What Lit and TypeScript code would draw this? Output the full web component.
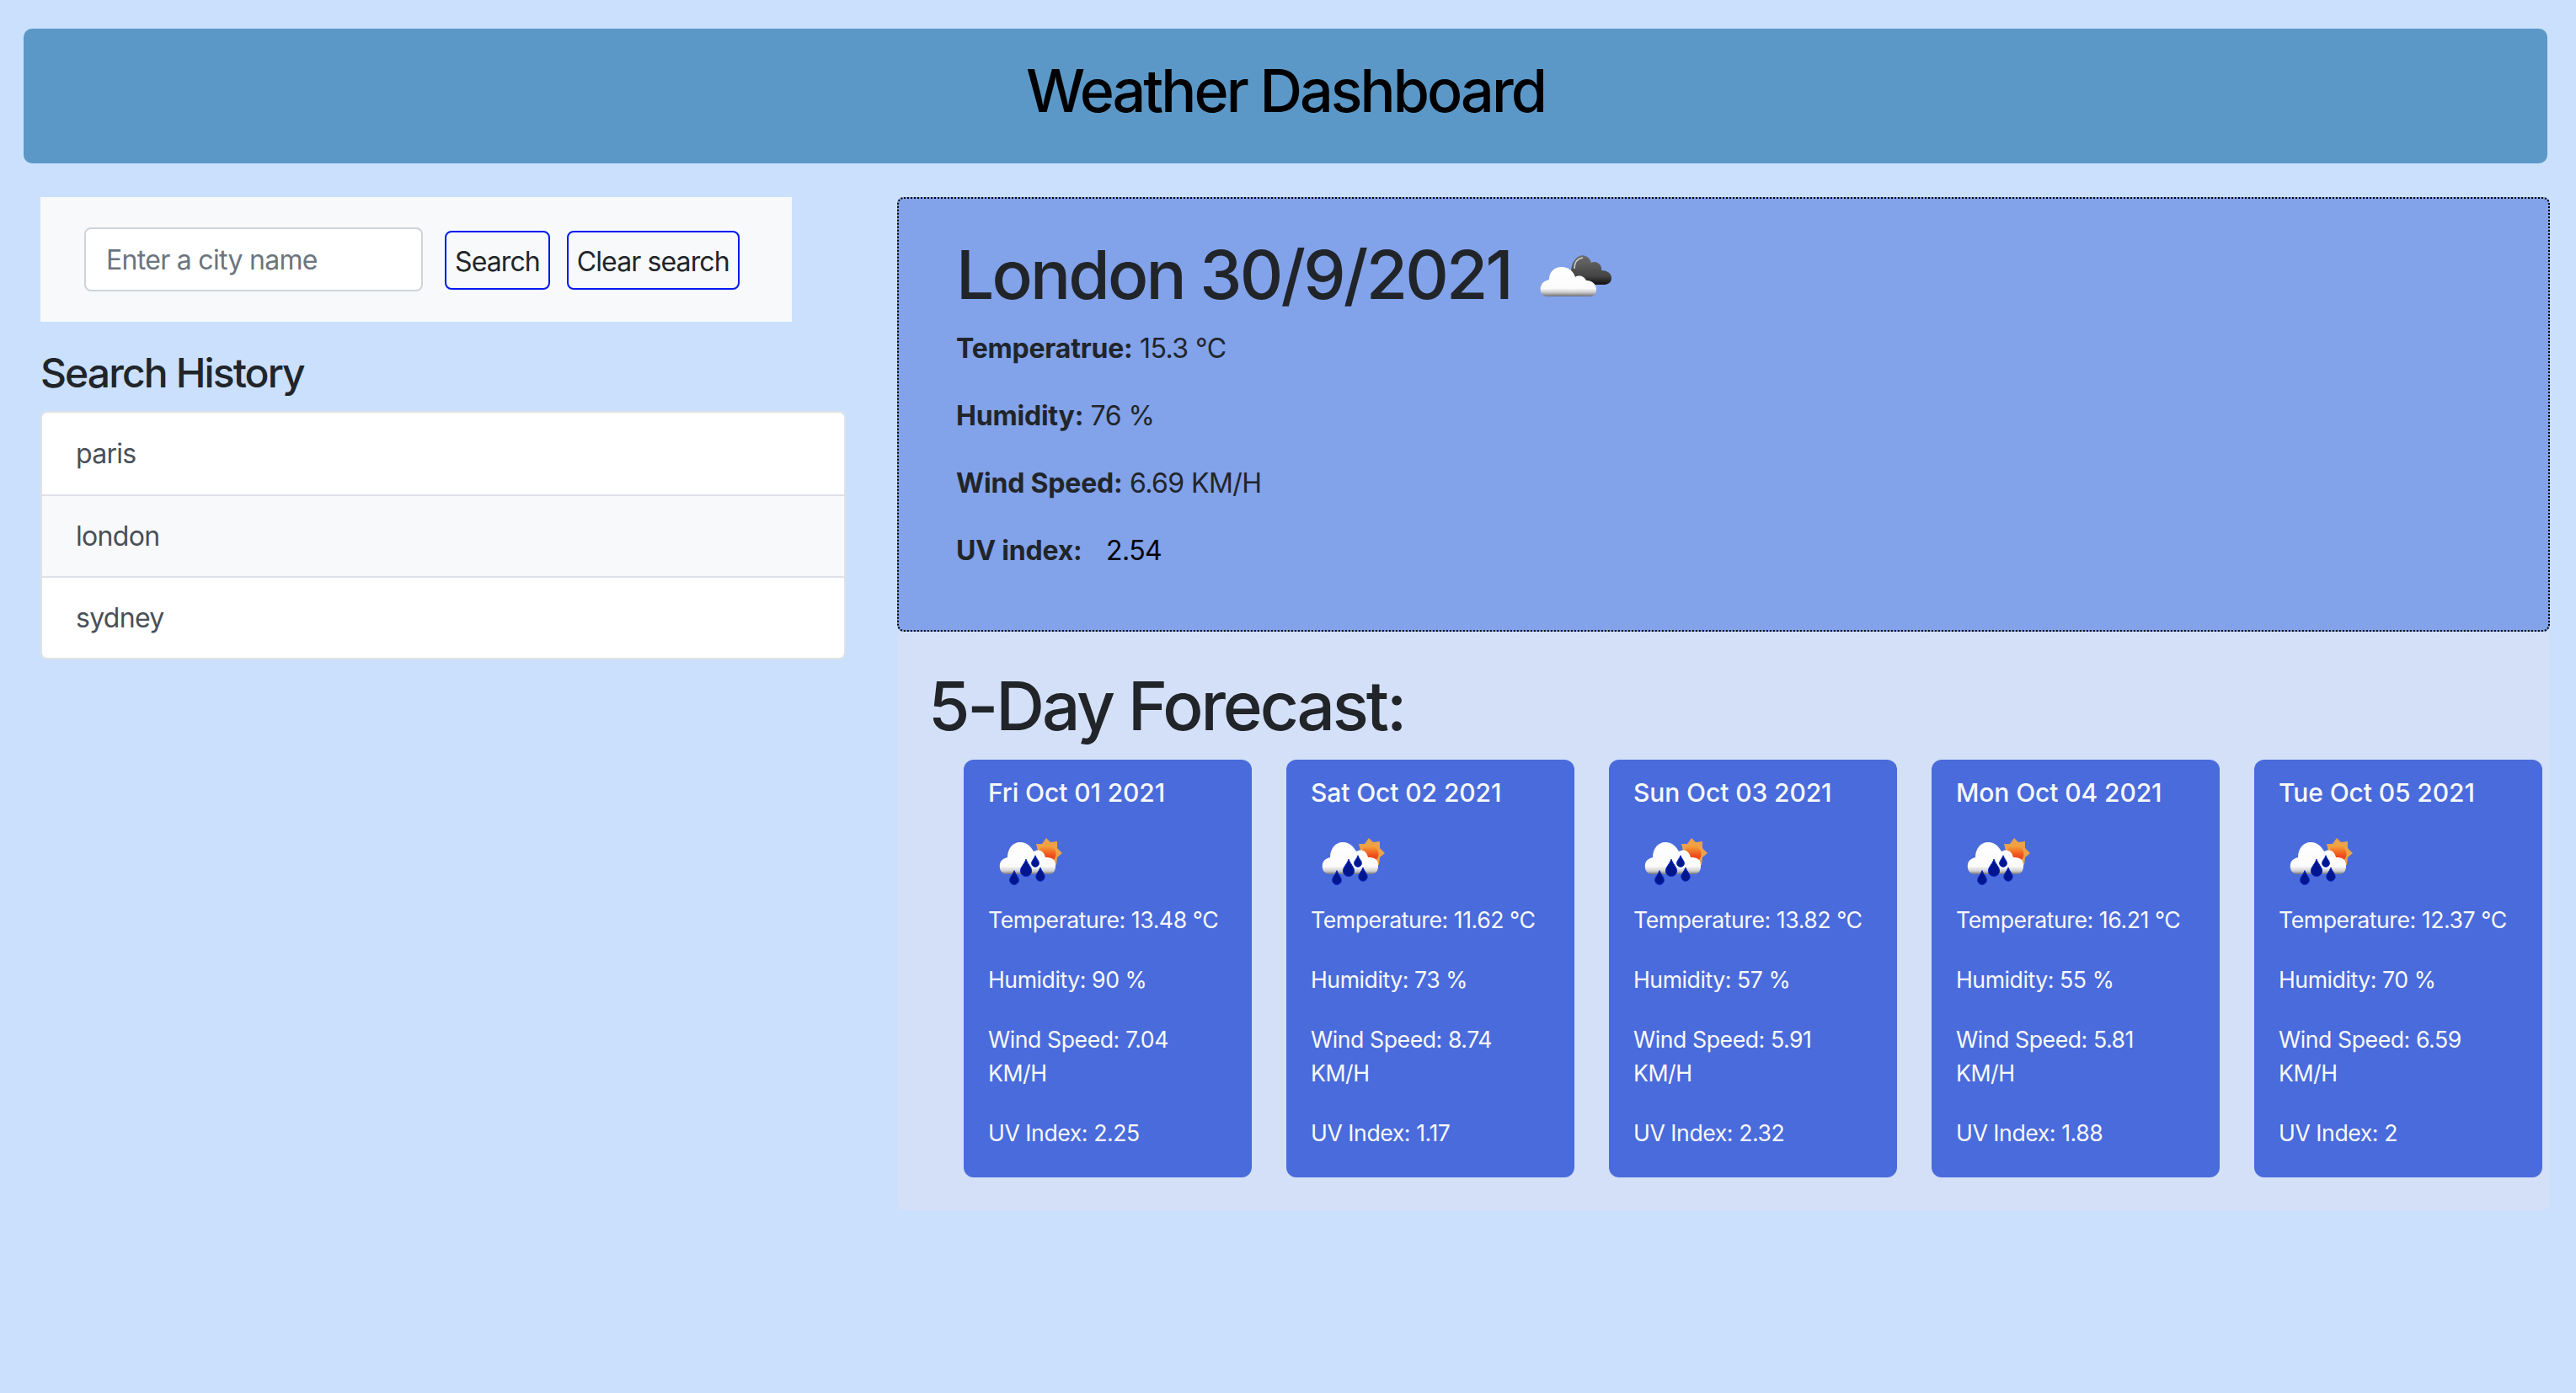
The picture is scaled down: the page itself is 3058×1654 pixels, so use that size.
import { LitElement, css, html, svg } from 'lit'
import { customElement } from 'lit/decorators.js'

const forecast = [
  { date: 'Fri Oct 01 2021', temp: '13.48', humidity: '90', wind: '7.04', uv: '2.25' },
  { date: 'Sat Oct 02 2021', temp: '11.62', humidity: '73', wind: '8.74', uv: '1.17' },
  { date: 'Sun Oct 03 2021', temp: '13.82', humidity: '57', wind: '5.91', uv: '2.32' },
  { date: 'Mon Oct 04 2021', temp: '16.21', humidity: '55', wind: '5.81', uv: '1.88' },
  { date: 'Tue Oct 05 2021', temp: '12.37', humidity: '70', wind: '6.59', uv: '2' },
]

const drop = (x: number, y: number, r: number) =>
  svg`<path d="M${x} ${y - r * 2.1} C${x + r * 0.3} ${y - r * 1.2} ${x + r} ${y - r * 0.7} ${x + r} ${y} A${r} ${r} 0 0 1 ${x - r} ${y} C${x - r} ${y - r * 0.7} ${x - r * 0.3} ${y - r * 1.2} ${x} ${y - r * 2.1}Z" fill="#00128f" stroke="#0a2bc4" stroke-width="1" />`

// cloudy icon from the current weather panel
@customElement('cloud-icon')
export class CloudIcon extends LitElement {
  static styles = css`
    :host {
      display: block;
      width: 100px;
      height: 100px;
    }
    svg {
      display: block;
    }
  `

  render() {
    return html`<svg width="100" height="100" viewBox="0 0 100 100">
      <defs>
        <linearGradient id="white" gradientUnits="userSpaceOnUse" x1="0" y1="40" x2="0" y2="74">
          <stop offset="0" stop-color="#fff" />
          <stop offset=".72" stop-color="#fbfbfb" />
          <stop offset=".86" stop-color="#c9c9c9" />
          <stop offset="1" stop-color="#6d6f74" />
        </linearGradient>
        <linearGradient id="dark" gradientUnits="userSpaceOnUse" x1="0" y1="26" x2="0" y2="60">
          <stop offset="0" stop-color="#6a6a6a" />
          <stop offset=".7" stop-color="#444" />
          <stop offset="1" stop-color="#111" />
        </linearGradient>
        <filter id="soft" x="-10%" y="-10%" width="120%" height="120%">
          <feGaussianBlur stdDeviation=".7" />
        </filter>
      </defs>
      <g filter="url(#soft)">
        <path
          d="M47 58 C42 50 43 34 51 28 C58 22 66 27 68 34 C74 31 81 36 80 43 C86 43 92 46 92 52 C92 58 87 60 83 60 L60 60Z"
          fill="url(#dark)"
        />
        <path d="M48 41 C48 33 52 29 58 28" fill="none" stroke="#c9c9c9" stroke-width="1.6" />
        <path
          d="M14 74 C8 72 6 65 9 60 C11 56 15 55 18 54 C18 45 24 39 33 39 C41 39 47 44 49 51 C53 48 60 50 62 55 C69 55 74 59 74 66 C74 71 71 74 66 74Z"
          fill="url(#white)"
        />
      </g>
    </svg>`
  }
}

// rain + sun icon used by the forecast cards
@customElement('rain-icon')
export class RainIcon extends LitElement {
  static styles = css`
    :host {
      display: block;
      width: 100px;
      height: 100px;
    }
    svg {
      display: block;
    }
  `

  render() {
    return html`<svg width="100" height="100" viewBox="0 0 100 100">
      <defs>
        <linearGradient id="white" gradientUnits="userSpaceOnUse" x1="0" y1="26" x2="0" y2="64">
          <stop offset="0" stop-color="#fff" />
          <stop offset=".75" stop-color="#fbfbfb" />
          <stop offset=".9" stop-color="#cfcfcf" />
          <stop offset="1" stop-color="#73767f" />
        </linearGradient>
        <linearGradient id="sun" gradientUnits="userSpaceOnUse" x1="0" y1="30" x2="0" y2="48">
          <stop offset="0" stop-color="#f5a63a" />
          <stop offset=".6" stop-color="#f0541f" />
          <stop offset="1" stop-color="#ee3b1e" />
        </linearGradient>
        <filter id="soft" x="-10%" y="-10%" width="120%" height="120%">
          <feGaussianBlur stdDeviation=".55" />
        </filter>
      </defs>
      <g filter="url(#soft)">
        <path
          d="M69 21 L74 26 L82 25 L82 33 L88 39 L82 44 L81 53 L70 52 L60 40 L57 28 L64 28Z"
          fill="#eba24a"
        />
        <circle cx="70" cy="40" r="10.5" fill="url(#sun)" />
        <path
          d="M21 64 C15 63 13 57 14 52 C15 47 19 45 23 44 C23 34 29 26 38 26 C47 26 51 32 54 37 C59 34 66 35 68 44 C71 44 75 44 78 47 C81 50 81 61 76 63 C74 64 72 64 70 64Z"
          fill="url(#white)"
        />
        <circle cx="56" cy="50" r="7.5" fill="#fff" />
        ${drop(31, 71, 5.4)} ${drop(45, 60, 6.6)} ${drop(62, 67, 5.2)} ${drop(56, 51, 4.4)}
      </g>
    </svg>`
  }
}

@customElement('app-root')
export class AppRoot extends LitElement {
  static styles = css`
    :host {
      display: block;
      min-height: 1654px;
      background: #cae0fd;
      font-family: Inter, 'Noto Sans', sans-serif;
      font-size: 32px;
      line-height: 48px;
      letter-spacing: -0.5px;
      color: #212529;
      padding: 34px 34px 0 28px;
      box-sizing: border-box;
    }
    * {
      box-sizing: border-box;
    }
    .top {
      height: 160px;
      background: #5b98c7;
      border-radius: 10px;
      display: flex;
      align-items: center;
      justify-content: center;
      padding-bottom: 12px;
    }
    .top h1 {
      margin: 0;
      font-size: 70px;
      line-height: 80px;
      font-weight: 500;
      letter-spacing: -2.95px;
      color: #000;
    }
    .layout {
      display: grid;
      grid-template-columns: 956px 1962px;
      column-gap: 61px;
      margin: 40px -3px 0 20px;
      align-items: start;
    }
    .search {
      width: 892px;
      height: 148px;
      background: #f8f9fa;
      display: flex;
      align-items: center;
      padding-left: 52px;
    }
    .search input {
      width: 402px;
      height: 76px;
      border: 2px solid #ced4da;
      border-radius: 8px;
      padding: 0 24px;
      font: inherit;
      letter-spacing: -0.7px;
      margin-right: 26px;
      background: #fff;
    }
    .search input::placeholder {
      color: #6c757d;
      opacity: 1;
    }
    .search button {
      height: 70px;
      margin-top: 2px;
      border: 2px solid #0019f0;
      border-radius: 8px;
      background: transparent;
      font: inherit;
      letter-spacing: -0.9px;
      color: #212529;
      padding: 4px 10px 0;
      margin-right: 20px;
    }
    .side h4 {
      margin: 32px 0 16px;
      font-size: 48px;
      line-height: 58px;
      font-weight: 500;
      letter-spacing: -1.9px;
    }
    .history {
      background: #fff;
      border: 2px solid #dfe2e6;
      border-radius: 8px;
      overflow: hidden;
      color: #495057;
      letter-spacing: -0.7px;
    }
    .history div {
      height: 97px;
      padding: 0 40px;
      display: flex;
      align-items: center;
      border-top: 2px solid #dfe2e6;
    }
    .history div:first-child {
      border-top: 0;
    }
    .history div:nth-child(even) {
      background: #f8f9fa;
    }
    .today {
      height: 516px;
      background: #82a2ea;
      border: 2px dotted #000;
      border-radius: 8px;
      padding: 46px 68px 0;
    }
    .today h2 {
      margin: 0;
      display: flex;
      align-items: center;
      font-size: 80px;
      line-height: 96px;
      font-weight: 500;
      letter-spacing: -2.8px;
      height: 88px;
    }
    .today cloud-icon {
      margin: 4px 0 0 27px;
    }
    .today p {
      margin: 0 0 32px;
      letter-spacing: -0.55px;
    }
    .today h2 + p {
      margin-top: 20px;
    }
    .today b {
      letter-spacing: -0.2px;
    }
    .uv {
      color: #000;
      margin-left: 20px;
    }
    .outlook {
      height: 687px;
      background: #d3e0f8;
      border-radius: 0 0 8px 8px;
      padding: 40px 9px 0 39px;
    }
    .outlook h2 {
      margin: 0 0 16px -2px;
      font-size: 80px;
      line-height: 96px;
      font-weight: 500;
      letter-spacing: -3.1px;
    }
    .cards {
      display: grid;
      grid-template-columns: repeat(5, 342px);
      column-gap: 41px;
      padding-left: 40px;
    }
    .card {
      height: 496px;
      background: #4a6bdb;
      border-radius: 12px;
      color: #f8f9fa;
      padding: 19px 29px 0;
      font-size: 26.67px;
      line-height: 40px;
      letter-spacing: -0.45px;
    }
    .card h5 {
      margin: 0;
      font-size: 30px;
      line-height: 40px;
      font-weight: 500;
      letter-spacing: -0.1px;
    }
    .card p {
      margin: 0 0 31px;
    }
    .card rain-icon {
      margin: 13px 0 -2px;
    }
    b {
      font-weight: 700;
    }
  `

  render() {
    return html`
      <header class="top"><h1>Weather Dashboard</h1></header>
      <div class="layout">
        <section class="side">
          <div class="search">
            <input type="text" placeholder="Enter a city name" />
            <button>Search</button>
            <button>Clear search</button>
          </div>
          <h4>Search History</h4>
          <div class="history">
            <div>paris</div>
            <div>london</div>
            <div>sydney</div>
          </div>
        </section>
        <section>
          <div class="today">
            <h2>London 30/9/2021 <cloud-icon></cloud-icon></h2>
            <p><b>Temperatrue:</b> 15.3 °C</p>
            <p><b>Humidity:</b> 76 %</p>
            <p><b>Wind Speed:</b> 6.69 KM/H</p>
            <p><b>UV index:</b> <span class="uv">2.54</span></p>
          </div>
          <div class="outlook">
            <h2>5-Day Forecast:</h2>
            <div class="cards">
              ${forecast.map(
                (day) => html`<article class="card">
                  <h5>${day.date}</h5>
                  <rain-icon></rain-icon>
                  <p>Temperature: ${day.temp} °C</p>
                  <p>Humidity: ${day.humidity} %</p>
                  <p>Wind Speed: ${day.wind} KM/H</p>
                  <p>UV Index: ${day.uv}</p>
                </article>`,
              )}
            </div>
          </div>
        </section>
      </div>
    `
  }
}
